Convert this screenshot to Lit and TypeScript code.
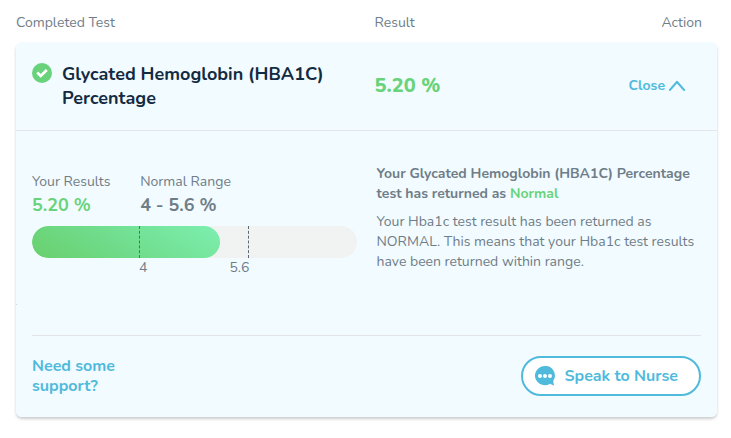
import { LitElement, html, css } from "lit";
import { customElement, state } from "lit/decorators.js";

@customElement("range-bar")
class RangeBar extends LitElement {
  static properties = {
    fill: { type: Number },
    low: { type: String },
    high: { type: String },
  };

  declare fill: number;
  declare low: string;
  declare high: string;

  static styles = css`
    :host {
      display: block;
    }
    .track {
      position: relative;
      height: 32px;
      border-radius: 16px;
      background: #f1f2f2;
      overflow: hidden;
    }
    .fill {
      height: 100%;
      border-radius: 16px;
      background: linear-gradient(30deg, #69d06d 0%, #70dc8c 45%, #7defb0 100%);
    }
    .scale {
      display: grid;
      grid-template-columns: 33fr 34fr 33fr;
    }
    .marks {
      position: absolute;
      inset: 0;
    }
    .band {
      grid-column: 2;
      border: 0 dashed #5d6973;
      border-width: 0 1px;
    }
    .labels {
      grid-column: 2;
      display: flex;
      justify-content: space-between;
    }
  `;

  render() {
    return html`
      <div class="track">
        <div class="fill" style="width: ${this.fill}%"></div>
        <div class="scale marks"><div class="band"></div></div>
      </div>
      <div class="scale">
        <div class="labels"><span>${this.low}</span><span>${this.high}</span></div>
      </div>
    `;
  }
}

@customElement("app-root")
class AppRoot extends LitElement {
  @state() private open = true;

  static styles = css`
    :host {
      display: block;
      padding: 0 14px 20px 16px;
      font: 14px/20px Nunito, "Open Sans", sans-serif;
      color: #6f7d88;
    }
    table {
      width: 100%;
      border-spacing: 0;
      table-layout: fixed;
    }
    th,
    td {
      padding: 0;
      text-align: left;
      font-weight: inherit;
    }
    .col-test {
      width: 51%;
    }
    .head th {
      padding: 13px 0 9px;
    }
    .head .action {
      padding-right: 15px;
    }
    .action {
      text-align: right;
    }
    .card {
      border-radius: 6px;
      box-shadow: 0 2px 3px rgba(0, 0, 0, 0.2);
    }
    .card th,
    .card td {
      background: #f2fbff;
    }
    .summary th,
    .summary td {
      border-bottom: 1px solid #e4e6e8;
      padding: 20px 0;
    }
    .summary th:first-child {
      padding-left: 16px;
      border-top-left-radius: 6px;
    }
    .summary td:last-child {
      padding-right: 32px;
      border-top-right-radius: 6px;
    }
    .head .result,
    .summary .result {
      padding-left: 1px;
    }
    .card .details {
      position: relative;
      padding: 0 16px;
      border-radius: 0 0 6px 6px;
    }
    .name {
      display: flex;
      gap: 10px;
      padding-right: 24px;
      font-size: 18px;
      line-height: 24px;
      font-weight: 700;
      color: #132b42;
    }
    .tick {
      flex: none;
      margin-top: 1px;
    }
    .value {
      font-size: 20px;
      line-height: 24px;
      font-weight: 800;
    }
    .green {
      color: #69d37b;
    }
    button {
      font: inherit;
      font-weight: 700;
      color: #4fbadc;
      background: none;
      border: 0;
      padding: 0;
      cursor: pointer;
    }
    .toggle {
      display: inline-flex;
      align-items: center;
      gap: 4px;
    }
    .closed {
      transform: rotate(180deg);
    }
    .body {
      display: grid;
      grid-template-columns: 1fr 1fr;
      gap: 20px;
      padding: 33px 0 55px;
    }
    .readings {
      display: grid;
      grid-template-columns: 1fr 2fr;
      margin: 8px 0;
    }
    .readings dd {
      margin: 1px 0;
      font-size: 18px;
      line-height: 24px;
      font-weight: 700;
    }
    p {
      margin: 0 0 8px;
    }
    .lead {
      font-weight: 700;
    }
    .dot {
      position: absolute;
      left: 0;
      bottom: 111px;
      font-size: 5px;
      line-height: 4px;
    }
    .footer {
      display: flex;
      align-items: center;
      justify-content: space-between;
      padding: 20px 0 21px;
      border-top: 1px solid #e1e5e7;
      font-size: 16px;
      font-weight: 700;
      color: #4fbadc;
    }
    .support {
      max-width: 100px;
    }
    .speak {
      display: flex;
      align-items: center;
      gap: 9px;
      height: 40px;
      padding: 0 21px 0 12px;
      border: 2px solid #4fbadc;
      border-radius: 20px;
      background: #fff;
    }
  `;

  render() {
    return html`
      <table>
        <thead>
          <tr class="head">
            <th class="col-test" scope="col">Completed Test</th>
            <th class="result" scope="col">Result</th>
            <th class="action" scope="col">Action</th>
          </tr>
        </thead>
        <tbody class="card">
          <tr class="summary">
            <th scope="row">
              <div class="name">
                <svg class="tick" width="20" height="20" viewBox="0 0 20 20" aria-hidden="true">
                  <circle cx="10" cy="10" r="10" fill="#69d37b" />
                  <path d="M5.2 9.6 8.7 12.9 14.8 7" fill="none" stroke="#fff" stroke-width="2.8" />
                </svg>
                <span>Glycated Hemoglobin (HBA1C) Percentage</span>
              </div>
            </th>
            <td class="result value green">5.20 %</td>
            <td class="action">
              <button class="toggle" aria-expanded=${this.open} @click=${() => (this.open = !this.open)}>
                ${this.open ? "Close" : "Open"}
                <svg class=${this.open ? "" : "closed"} width="16" height="12" viewBox="0 0 16 12" aria-hidden="true">
                  <path d="M1 9.9 8 1.9l7 8" fill="none" stroke="#4fbadc" stroke-width="2.2" stroke-linecap="round" stroke-linejoin="round" />
                </svg>
              </button>
            </td>
          </tr>
          ${this.open ? this.renderDetails() : ""}
        </tbody>
      </table>
    `;
  }

  private renderDetails() {
    return html`
      <tr>
        <td class="details" colspan="3">
          <div class="body">
            <div>
              <dl class="readings">
                <div><dt>Your Results</dt><dd class="green">5.20 %</dd></div>
                <div><dt>Normal Range</dt><dd>4 - 5.6 %</dd></div>
              </dl>
              <range-bar .fill=${58} .low=${"4"} .high=${"5.6"}></range-bar>
            </div>
            <div>
              <p class="lead">
                Your Glycated Hemoglobin (HBA1C) Percentage test has returned as
                <span class="green">Normal</span>
              </p>
              <p>
                Your Hba1c test result has been returned as NORMAL. This means that your Hba1c test
                results have been returned within range.
              </p>
            </div>
          </div>
          <span class="dot">.</span>
          <div class="footer">
            <div class="support">Need some support?</div>
            <button class="speak">
              <svg width="20" height="20" viewBox="0 0 20 20" aria-hidden="true">
                <path d="M10 0a10 9.6 0 1 0 5.2 17.8L19 19.8 18.2 15A9.6 9.6 0 0 0 10 0z" fill="#4fbadc" />
                <circle cx="5" cy="10" r="2" fill="#fff" />
                <circle cx="10" cy="10" r="2" fill="#fff" />
                <circle cx="15" cy="10" r="2" fill="#fff" />
              </svg>
              Speak to Nurse
            </button>
          </div>
        </td>
      </tr>
    `;
  }
}
